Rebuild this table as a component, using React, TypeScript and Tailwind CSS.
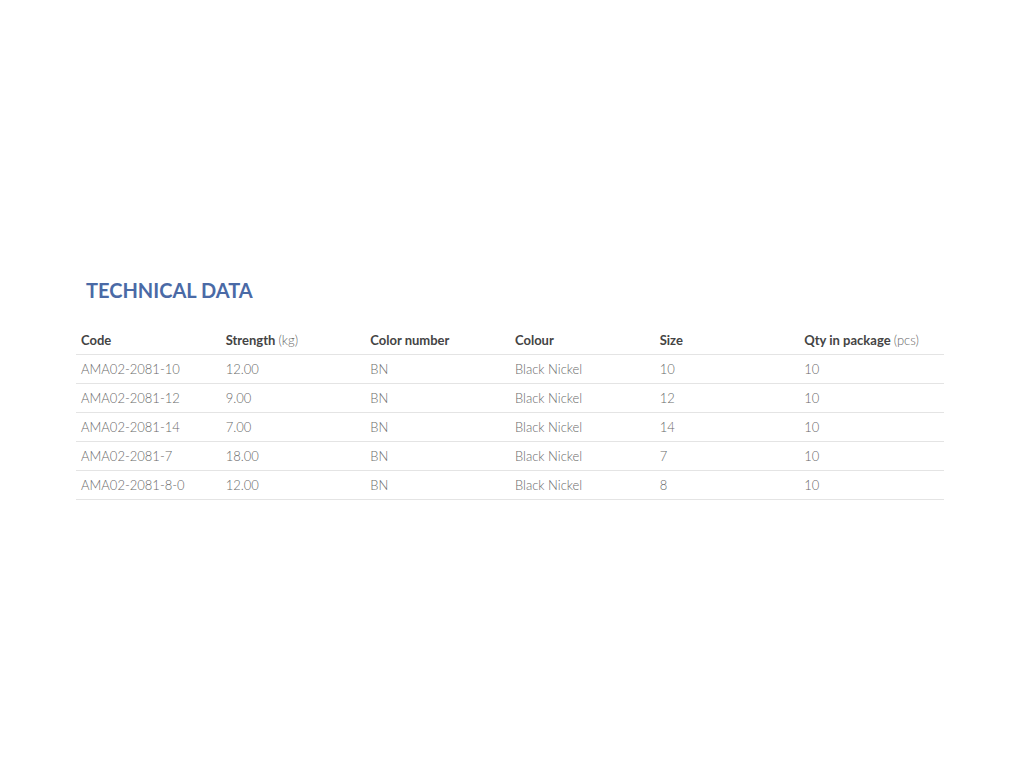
import React from "react";

const rows = [
  ["AMA02-2081-10", "12.00", "BN", "Black Nickel", "10", "10"],
  ["AMA02-2081-12", "9.00", "BN", "Black Nickel", "12", "10"],
  ["AMA02-2081-14", "7.00", "BN", "Black Nickel", "14", "10"],
  ["AMA02-2081-7", "18.00", "BN", "Black Nickel", "7", "10"],
  ["AMA02-2081-8-0", "12.00", "BN", "Black Nickel", "8", "10"],
];

export default function App() {
  return (
    <div className="w-[1024px] h-[768px] bg-white" style={{ fontFamily: "Lato, 'Open Sans', sans-serif" }}>
      <div className="pt-[276px] pl-[76px] w-[944px]">
        <h2 className="pl-[10px] text-[20px] leading-[28px] font-bold text-[#4a6aa6]">TECHNICAL DATA</h2>
        <table className="mt-[22px] w-[868px] table-fixed border-collapse text-[13px]">
          <thead>
            <tr className="border-b border-[#e4e4e4] h-[28px]">
              <th className="text-left font-bold text-[#444] px-[5px] pt-[2px]">Code</th>
              <th className="text-left font-bold text-[#444] px-[5px] pt-[2px]">Strength <span className="font-light text-[#666]">(kg)</span></th>
              <th className="text-left font-bold text-[#444] px-[5px] pt-[2px]">Color number</th>
              <th className="text-left font-bold text-[#444] px-[5px] pt-[2px]">Colour</th>
              <th className="text-left font-bold text-[#444] px-[5px] pt-[2px]">Size</th>
              <th className="text-left font-bold text-[#444] px-[5px] pt-[2px]">Qty in package <span className="font-light text-[#666]">(pcs)</span></th>
            </tr>
          </thead>
          <tbody>
            {rows.map((r, i) => (
              <tr key={i} className="border-b border-[#e4e4e4] h-[29px]">
                {r.map((c, j) => (
                  <td key={j} className="px-[5px] pt-[2px] font-light text-[#6a6a6a]">{c}</td>
                ))}
              </tr>
            ))}
          </tbody>
        </table>
      </div>
    </div>
  );
}
